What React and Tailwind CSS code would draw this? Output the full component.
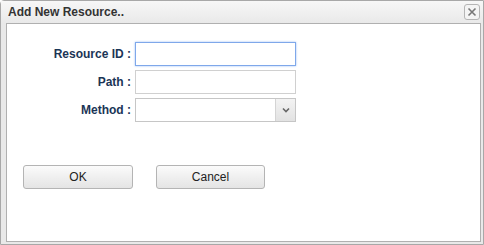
import React from 'react';

export default function App() {
    return (
        <div className="w-[484px] h-[245px] bg-[#e9e9e9] border border-[#a8a8a8] rounded-tl-[4px] flex flex-col font-['Liberation_Sans',Arial,sans-serif]">
            {/* Title bar */}
            <div className="h-[22px] flex items-center justify-between pl-[7px] pr-[3px] bg-gradient-to-b from-[#f7f7f7] to-[#e9e9e9]">
                <span className="text-[12px] font-bold text-[#333]">Add New Resource..</span>
                <button className="w-[16px] h-[16px] rounded-[3px] border border-[#b5b5b5] bg-[#f4f4f4] flex items-center justify-center">
                    <svg width="10" height="10" viewBox="0 0 10 10">
                        <path d="M1.5 1.5 L8.5 8.5 M8.5 1.5 L1.5 8.5" stroke="#777" strokeWidth="1.6" />
                    </svg>
                </button>
            </div>

            {/* Content panel */}
            <div className="flex-1 ml-[5px] mr-[2px] mb-[2px] bg-white border border-[#b0b0b0]">
                <div className="pt-[18px] flex flex-col gap-[4px]">
                    <div className="flex items-center">
                        <label className="w-[128px] text-right pr-[4px] text-[12px] font-bold text-[#1b3556]">Resource ID :</label>
                        <input className="w-[161px] h-[24px] border border-[#7fa8ea] shadow-[0_0_2px_#9dbff5] outline-none px-1 text-[12px]" />
                    </div>
                    <div className="flex items-center">
                        <label className="w-[128px] text-right pr-[4px] text-[12px] font-bold text-[#1b3556]">Path :</label>
                        <input className="w-[161px] h-[24px] border border-[#d0d0d0] outline-none px-1 text-[12px]" />
                    </div>
                    <div className="flex items-center">
                        <label className="w-[128px] text-right pr-[4px] text-[12px] font-bold text-[#1b3556]">Method :</label>
                        <div className="w-[161px] h-[24px] border border-[#c6c6c6] flex justify-end">
                            <div className="w-[20px] h-full border-l border-[#d4d4d4] bg-gradient-to-b from-[#f3f3f3] to-[#e2e2e2] flex items-center justify-center">
                                <svg width="8" height="6" viewBox="0 0 8 6">
                                    <path d="M1 1.5 L4 4.5 L7 1.5" stroke="#666" strokeWidth="1.6" fill="none" />
                                </svg>
                            </div>
                        </div>
                    </div>
                </div>

                <div className="mt-[43px] pl-[16px] flex gap-[23px]">
                    <button className="w-[110px] h-[24px] rounded-[3px] border border-[#b4b4b4] bg-gradient-to-b from-[#fbfbfb] to-[#e4e4e4] text-[12px] text-[#222]">OK</button>
                    <button className="w-[109px] h-[24px] rounded-[3px] border border-[#b4b4b4] bg-gradient-to-b from-[#fbfbfb] to-[#e4e4e4] text-[12px] text-[#222]">Cancel</button>
                </div>
            </div>
        </div>
    );
}
